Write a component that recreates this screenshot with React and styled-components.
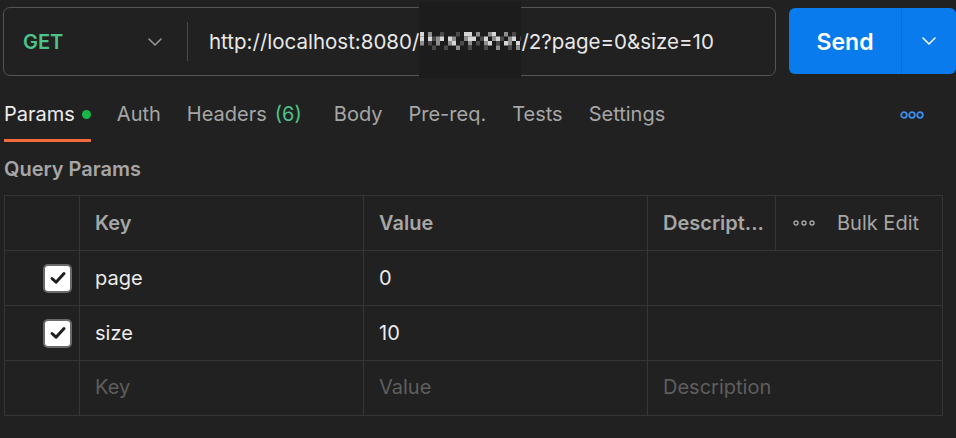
import styled, { createGlobalStyle } from "styled-components";

const GlobalStyle = createGlobalStyle`
  body {
    margin: 0;
    background: #212121;
    font-family: Inter, "Noto Sans", sans-serif;
  }
`;

// blurred part of the url, drawn as a pixel mosaic
const mosaicRows = [
  "1 2  3   3 11 2  21  2 3  ",
  "1 1321 12  211 31 213 21 3",
  "2 3 2  21 3 2 3 21 3 12 1 ",
  "   3  3  2  3   3  2  3 2 ",
];
const shades = { 1: "#d6d6d6", 2: "#8e8e8e", 3: "#4a4a4a" };

export default function App() {
  return (
    <>
      <GlobalStyle />
      <Page>
        <TopBar>
          <UrlBox>
            <Method>
              <MethodName>GET</MethodName>
              <Chevron color="#9a9a9a" />
            </Method>
            <Divider />
            <UrlText>
              http://localhost:8080/
              <Mosaic>
                <svg width="102" height="76" viewBox="0 0 102 76">
                  <rect width="102" height="76" fill="#1c1c1c" />
                  {mosaicRows.map((row, y) =>
                    row.split("").map((ch, x) =>
                      ch === " " ? null : (
                        <rect key={`${x}-${y}`} x={1 + x * 4} y={30 + y * 4.5} width="4" height="4.5" fill={shades[ch]} />
                      )
                    )
                  )}
                </svg>
              </Mosaic>
              /2?page=0&amp;size=10
            </UrlText>
          </UrlBox>
          <SendButton>
            <SendLabel>Send</SendLabel>
            <SendMenu>
              <Chevron color="#ffffff" />
            </SendMenu>
          </SendButton>
        </TopBar>

        <Tabs>
          <Tab active>
            Params<Dot />
          </Tab>
          <Tab>Auth</Tab>
          <Tab extra>
            Headers<Count>(6)</Count>
          </Tab>
          <Tab>Body</Tab>
          <Tab>Pre-req.</Tab>
          <Tab>Tests</Tab>
          <Tab>Settings</Tab>
          <Spacer />
          <MoreIcon>
            <svg width="24" height="8" viewBox="0 0 24 8">
              <circle cx="4" cy="4" r="2.8" fill="none" stroke="#3b8ef0" strokeWidth="1.8" />
              <circle cx="12" cy="4" r="2.8" fill="none" stroke="#3b8ef0" strokeWidth="1.8" />
              <circle cx="20" cy="4" r="2.8" fill="none" stroke="#3b8ef0" strokeWidth="1.8" />
            </svg>
          </MoreIcon>
        </Tabs>

        <SectionTitle>Query Params</SectionTitle>

        <Table>
          <Row>
            <CheckCell />
            <HeadCell>Key</HeadCell>
            <HeadCell>Value</HeadCell>
            <HeadCell>Descript...</HeadCell>
            <BulkCell>
              <svg width="22" height="6" viewBox="0 0 22 6">
                <circle cx="3" cy="3" r="2" fill="none" stroke="#a6a6a6" strokeWidth="1.4" />
                <circle cx="11" cy="3" r="2" fill="none" stroke="#a6a6a6" strokeWidth="1.4" />
                <circle cx="19" cy="3" r="2" fill="none" stroke="#a6a6a6" strokeWidth="1.4" />
              </svg>
              <span>Bulk Edit</span>
            </BulkCell>
          </Row>
          {[
            ["page", "0"],
            ["size", "10"],
          ].map(([k, v]) => (
            <Row key={k}>
              <CheckCell>
                <Checkbox>
                  <svg width="20" height="20" viewBox="0 0 20 20">
                    <path d="M4 10.5 L8 14.2 L16 5.6" fill="none" stroke="#1e1e1e" strokeWidth="3" strokeLinecap="round" strokeLinejoin="round" />
                  </svg>
                </Checkbox>
              </CheckCell>
              <Cell>{k}</Cell>
              <Cell>{v}</Cell>
              <Cell wide />
            </Row>
          ))}
          <Row>
            <CheckCell />
            <Cell placeholder>Key</Cell>
            <Cell placeholder>Value</Cell>
            <Cell wide placeholder>Description</Cell>
          </Row>
        </Table>
      </Page>
    </>
  );
}

function Chevron({ color }) {
  return (
    <svg width="16" height="10" viewBox="0 0 16 10">
      <path d="M2 2 L8 8 L14 2" fill="none" stroke={color} strokeWidth="1.5" strokeLinecap="round" strokeLinejoin="round" />
    </svg>
  );
}

const Page = styled.div`
  padding: 7px 0 0 3px;
  width: 953px;
  color: #e6e6e6;
`;

const TopBar = styled.div`
  display: flex;
  gap: 13px;
  height: 69px;
`;

const UrlBox = styled.div`
  flex: 1;
  display: flex;
  align-items: center;
  border: 1px solid #545454;
  border-radius: 7px;
  box-sizing: border-box;
  height: 69px;
`;

const Method = styled.div`
  display: flex;
  align-items: center;
  justify-content: space-between;
  width: 140px;
  padding: 0 24px 0 19px;
`;

const MethodName = styled.span`
  color: #4cc38a;
  font-size: 20px;
  font-weight: 600;
`;

const Divider = styled.div`
  width: 1px;
  height: 39px;
  background: #4a4a4a;
`;

const UrlText = styled.div`
  display: flex;
  align-items: center;
  height: 100%;
  padding-left: 21px;
  font-size: 20.5px;
  color: #e8e8e8;
  white-space: pre;
`;

const Mosaic = styled.span`
  display: inline-flex;
  align-self: flex-start;
  margin-top: -6px;
  height: 76px;
`;

const SendButton = styled.div`
  display: flex;
  width: 167px;
  height: 66px;
  margin-top: 1px;
  border-radius: 6px;
  overflow: hidden;
  background: #097bed;
`;

const SendLabel = styled.div`
  flex: 1;
  display: flex;
  align-items: center;
  justify-content: center;
  color: #ffffff;
  font-size: 23px;
  font-weight: 600;
  padding-top: 1px;
`;

const SendMenu = styled.div`
  width: 54px;
  display: flex;
  align-items: center;
  justify-content: center;
  border-left: 1px solid #0a6ccf;
`;

const Tabs = styled.div`
  display: flex;
  align-items: stretch;
  height: 46px;
  margin-top: 20px;
  padding-left: 1px;
  gap: 26px;
`;

const Tab = styled.div`
  display: flex;
  align-items: center;
  gap: 8px;
  font-size: 20px;
  color: ${(p) => (p.active ? "#ececec" : "#a6a6a6")};
  border-bottom: 3px solid ${(p) => (p.active ? "#f26b3a" : "transparent")};
  padding: 0 ${(p) => (p.extra ? "6px" : "0")} 7px 0;
  white-space: pre;
`;

const Dot = styled.span`
  width: 9px;
  height: 9px;
  margin-left: -1px;
  border-radius: 50%;
  background: #14b84b;
`;

const Count = styled.span`
  color: #4cc38a;
`;

const Spacer = styled.div`
  flex: 1;
`;

const MoreIcon = styled.div`
  display: flex;
  align-items: center;
  padding: 0 32px 8px 0;
`;

const SectionTitle = styled.div`
  padding: 15px 0 0 1px;
  font-size: 20px;
  font-weight: 600;
  color: #a6a6a6;
  height: 38px;
`;

const Table = styled.div`
  width: 938px;
  margin-left: 1px;
  border-top: 1px solid #353535;
  border-left: 1px solid #353535;
`;

const Row = styled.div`
  display: grid;
  grid-template-columns: 75px 284px 284px 128px 1fr;
  height: 55px;
`;

const CellBase = styled.div`
  display: flex;
  align-items: center;
  border-right: 1px solid #353535;
  border-bottom: 1px solid #353535;
  padding-left: 15px;
  font-size: 20px;
  white-space: nowrap;
  overflow: hidden;
`;

const Cell = styled(CellBase)`
  grid-column: ${(p) => (p.wide ? "span 2" : "auto")};
  color: ${(p) => (p.placeholder ? "#5e5e5e" : "#ececec")};
  padding-bottom: ${(p) => (p.placeholder ? "3px" : "0")};
`;

const HeadCell = styled(CellBase)`
  font-weight: 600;
  color: #a6a6a6;
`;

const BulkCell = styled(CellBase)`
  gap: 22px;
  padding-left: 17px;
  color: #a6a6a6;
`;

const CheckCell = styled(CellBase)`
  justify-content: flex-end;
  padding: 0 7px 0 0;
`;

const Checkbox = styled.div`
  width: 29px;
  height: 29px;
  box-sizing: border-box;
  border: 2px solid #6a6a6a;
  border-radius: 5px;
  background: #ffffff;
  display: flex;
  align-items: center;
  justify-content: center;
`;
